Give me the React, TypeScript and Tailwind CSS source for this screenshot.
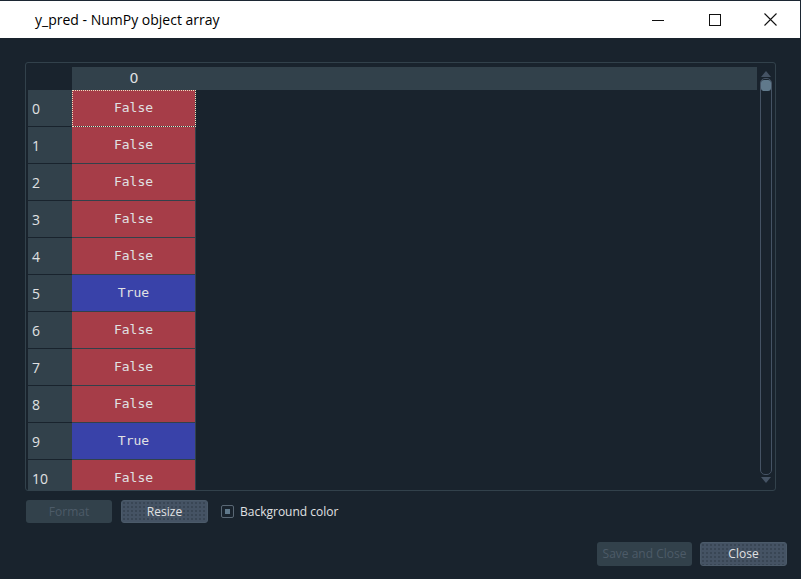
import React from "react";

const values = [false, false, false, false, false, true, false, false, false, true, false];

const dots =
  "bg-[radial-gradient(#2b3642_0.6px,transparent_0.8px)] bg-[length:4px_4px]";

function TitleBar() {
  return (
    <div className="h-[38px] bg-white flex items-center border-t border-r border-[#1c2733] shrink-0">
      <div className="pl-[35px] text-[14px] text-[#000] font-['Open_Sans','Noto_Sans',sans-serif] flex-1">
        y_pred - NumPy object array
      </div>
      <div className="flex items-center h-full">
        <div className="w-[57px] h-full flex items-center justify-center">
          <svg width="12" height="12" viewBox="0 0 12 12">
            <path d="M0 6.5h12" stroke="#111" strokeWidth="1" />
          </svg>
        </div>
        <div className="w-[57px] h-full flex items-center justify-center">
          <svg width="12" height="12" viewBox="0 0 12 12">
            <rect x="0.5" y="0.5" width="11" height="11" fill="none" stroke="#111" strokeWidth="1" />
          </svg>
        </div>
        <div className="w-[57px] h-full flex items-center justify-center pr-[2px]">
          <svg width="13" height="13" viewBox="0 0 13 13">
            <path d="M0.5 0.5l12 12M12.5 0.5l-12 12" stroke="#111" strokeWidth="1.1" />
          </svg>
        </div>
      </div>
    </div>
  );
}

function Scrollbar() {
  return (
    <div className="w-[18px] flex flex-col items-center pt-[4px] pb-[7px]">
      <svg width="10" height="6" viewBox="0 0 10 6" className="mb-[1px]">
        <path d="M5 0L10 6H0z" fill="#455364" />
      </svg>
      <div className="flex-1 w-[12px] border border-[#455364] rounded-[5px] flex justify-center pt-[1px]">
        <div className="w-[10px] h-[11px] bg-[#60798b] rounded-[3px]" />
      </div>
      <svg width="10" height="6" viewBox="0 0 10 6" className="mt-[2px]">
        <path d="M0 0H10L5 6z" fill="#455364" />
      </svg>
    </div>
  );
}

function Table() {
  return (
    <div className="mx-[25px] mt-[24px] h-[429px] border border-[#32414b] rounded-[3px] flex overflow-hidden pl-[2px] pt-[4px]">
      <div className="flex-1 flex flex-col overflow-hidden">
        <div className="flex h-[23px] shrink-0">
          <div className="w-[44px] bg-[#19232d]" />
          <div className="flex-1 bg-[#32414b] flex">
            <div className="w-[124px] flex items-center justify-center text-[14px] text-[#e0e1e3] font-['DejaVu_Sans',sans-serif]">
              0
            </div>
          </div>
        </div>
        {values.map((v, i) => (
          <div key={i} className="flex h-[37px] shrink-0">
            <div className="w-[44px] bg-[#32414b] border-b border-[#19232d] flex items-center pl-[4px] text-[14px] text-[#e0e1e3] font-['Open_Sans','Noto_Sans',sans-serif]">
              {i}
            </div>
            <div
              className={`w-[124px] flex items-center justify-center text-[13px] text-[#e0e1e3] font-['DejaVu_Sans_Mono',monospace] border-b border-r border-[#32414b] ${
                v ? "bg-[#3942a9]" : "bg-[#a63d48]"
              } ${i === 0 ? "outline outline-1 outline-dotted outline-[#f0e0c0] -outline-offset-1" : ""}`}
            >
              {v ? "True" : "False"}
            </div>
          </div>
        ))}
      </div>
      <Scrollbar />
    </div>
  );
}

export default function App() {
  return (
    <div className="w-[801px] h-[579px] bg-[#19232d] flex flex-col overflow-hidden font-['Open_Sans','Noto_Sans',sans-serif]">
      <TitleBar />
      <Table />
      <div className="flex items-center mt-[9px] ml-[26px] h-[23px]">
        <div className="w-[86px] h-[23px] rounded-[3px] bg-[#32414b] flex items-center justify-center text-[12px] text-[#4d5b68]">
          Format
        </div>
        <div className={`ml-[9px] w-[87px] h-[23px] rounded-[3px] border border-[#4b5a69] bg-[#455364] ${dots} flex items-center justify-center text-[12px] text-[#e0e1e3]`}>
          Resize
        </div>
        <div className="ml-[13px] w-[13px] h-[13px] border border-[#5a6875] rounded-[2px] flex items-center justify-center">
          <div className="w-[5px] h-[5px] bg-[#60798b]" />
        </div>
        <span className="ml-[6px] text-[12px] text-[#e0e1e3]">Background color</span>
      </div>
      <div className="flex justify-end mt-[19px] mr-[14px] gap-[8px]">
        <div className="w-[95px] h-[24px] rounded-[3px] bg-[#32414b] flex items-center justify-center text-[12px] text-[#4d5b68]">
          Save and Close
        </div>
        <div className={`w-[87px] h-[24px] rounded-[3px] border border-[#4b5a69] bg-[#455364] ${dots} flex items-center justify-center text-[12px] text-[#e0e1e3]`}>
          Close
        </div>
      </div>
    </div>
  );
}
